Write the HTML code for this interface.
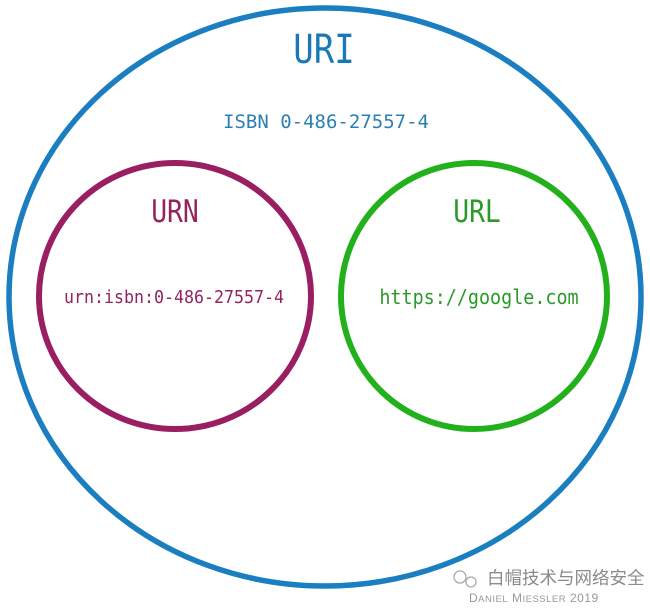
<!DOCTYPE html>
<html><head><meta charset="utf-8"><style>
html,body{margin:0;padding:0;background:#fff;width:650px;height:609px;overflow:hidden}
svg{display:block}
</style></head><body>
<svg width="650" height="609" viewBox="0 0 650 609" xmlns="http://www.w3.org/2000/svg">
<ellipse cx="325" cy="297" rx="316" ry="289" fill="none" stroke="#1a7ec0" stroke-width="5.5"/>
<ellipse cx="175" cy="296" rx="136" ry="133" fill="none" stroke="#9a1e62" stroke-width="6"/>
<ellipse cx="474" cy="296" rx="133" ry="133" fill="none" stroke="#22b01c" stroke-width="6"/>
<g font-family="'DejaVu Sans Mono','Liberation Mono',monospace" text-anchor="middle">
<text x="324" y="63" font-size="40" fill="#1a78b8" transform="translate(324 0) scale(0.85 1) translate(-324 0)">URI</text>
<text x="326" y="128" font-size="19" fill="#2a7fb5" transform="translate(326 0) scale(1.0 1) translate(-326 0)">ISBN 0-486-27557-4</text>
<text x="175" y="222" font-size="31" fill="#93245f" transform="translate(175 0) scale(0.85 1) translate(-175 0)">URN</text>
<text x="174" y="303" font-size="17.5" fill="#93245f" transform="translate(174 0) scale(0.95 1) translate(-174 0)">urn:isbn:0-486-27557-4</text>
<text x="477" y="222" font-size="31" fill="#2c9a2a" transform="translate(477 0) scale(0.85 1) translate(-477 0)">URL</text>
<text x="479" y="304" font-size="20" fill="#2c9a2a" transform="translate(479 0) scale(0.92 1) translate(-479 0)">https://google.com</text>
</g>
<g fill="none" stroke="#aaa" stroke-width="1.3">
<circle cx="460" cy="577" r="6"/><circle cx="471" cy="582" r="5"/>
</g>
<text x="487" y="584" font-family="'Noto Sans CJK SC',sans-serif" font-size="17.5" fill="#8a8a8a">白帽技术与网络安全</text>
<text x="469" y="602" font-family="'Liberation Sans',sans-serif" font-size="12" fill="#999" letter-spacing="0.5">D<tspan font-size="9.5">ANIEL</tspan> M<tspan font-size="9.5">IESSLER</tspan> 2019</text>
</svg>
</body></html>
